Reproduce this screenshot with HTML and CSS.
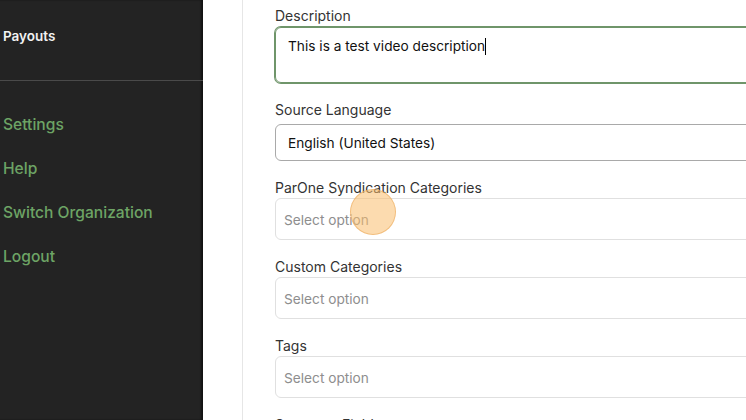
FILE: index.html
```html
<!DOCTYPE html>
<html lang="en">
<head>
<meta charset="utf-8">
<title>Edit video</title>
<link rel="stylesheet" href="styles.css">
</head>
<body>
<div class="app">
  <aside class="sidebar">
    <div class="side-top">
      <a class="side-item">Payouts</a>
    </div>
    <nav class="side-links">
      <a class="side-link">Settings</a>
      <a class="side-link">Help</a>
      <a class="side-link">Switch Organization</a>
      <a class="side-link">Logout</a>
    </nav>
  </aside>
  <main class="main">
    <section class="card">
      <div class="field">
        <label class="label">Description</label>
        <div class="box textarea focused">This is a test video description<span class="caret"></span></div>
      </div>
      <div class="field">
        <label class="label">Source Language</label>
        <div class="box select">English (United States)</div>
      </div>
      <div class="field">
        <label class="label">ParOne Syndication Categories</label>
        <div class="box multi"><span class="placeholder">Select option</span><span class="click"></span></div>
      </div>
      <div class="field">
        <label class="label">Custom Categories</label>
        <div class="box multi"><span class="placeholder">Select option</span></div>
      </div>
      <div class="field">
        <label class="label">Tags</label>
        <div class="box multi"><span class="placeholder">Select option</span></div>
      </div>
      <div class="field">
        <label class="label">Summary Field</label>
      </div>
    </section>
  </main>
</div>
</body>
</html>
```

FILE: styles.css
```css
* { box-sizing: border-box; }
html, body { margin: 0; padding: 0; height: 100%; overflow: hidden; }
body {
  font-family: Inter, "Liberation Sans", Arial, sans-serif;
  background: #ffffff;
  color: #222;
}
.app {
  display: flex;
  height: 420px;
  width: 746px;
  overflow: hidden;
}
.sidebar {
  width: 203px;
  flex: none;
  background: #232323;
  box-shadow: inset -2px 0 2px rgba(0,0,0,0.5);
  display: flex;
  flex-direction: column;
}
.side-top {
  height: 81px;
  border-bottom: 1px solid #4a4a4a;
  padding: 27px 0 0 3px;
}
.side-item {
  display: block;
  color: #f2f2f2;
  font-size: 13.5px;
  font-weight: 600;
  line-height: 18px;
}
.side-links {
  display: flex;
  flex-direction: column;
  gap: 22px;
  padding: 33px 0 0 3px;
}
.side-link {
  display: block;
  color: #6da465;
  font-size: 15.6px;
  font-weight: 500;
  line-height: 22px;
}
.main {
  flex: 1;
  padding-left: 39px;
  overflow: hidden;
}
.card {
  border-left: 1px solid #e6e6e6;
  padding: 7px 0 0 32px;
  width: 700px;
  display: flex;
  flex-direction: column;
  gap: 18px;
}
.field {
  display: flex;
  flex-direction: column;
}
.label {
  font-size: 14px;
  line-height: 18px;
  color: #333;
  height: 18px;
}
.box {
  position: relative;
  width: 620px;
  border-radius: 6px;
  font-size: 13.7px;
}
.textarea {
  margin-top: 2px;
  height: 56px;
  border: 1px solid #6f956a;
  box-shadow: 0 0 0 1px #6f956a;
  padding: 9px 12px;
  color: #111;
  line-height: 18px;
}
.caret {
  display: inline-block;
  width: 1px;
  height: 17px;
  background: #000;
  vertical-align: -4px;
}
.select {
  margin-top: 5px;
  height: 37px;
  border: 1px solid #a9a9a9;
  padding: 1px 12px 0;
  line-height: 35px;
  color: #111;
}
.multi {
  margin-top: 1px;
  height: 42px;
  border: 1px solid #e0e0e0;
  padding: 1px 8px 0;
  line-height: 40px;
}
.placeholder { color: #8e8e8e; }
.click {
  position: absolute;
  left: 74px;
  top: -10px;
  width: 46px;
  height: 46px;
  border-radius: 50%;
  background: rgba(250, 190, 110, 0.55);
  border: 1px solid rgba(235, 170, 90, 0.6);
}
```
